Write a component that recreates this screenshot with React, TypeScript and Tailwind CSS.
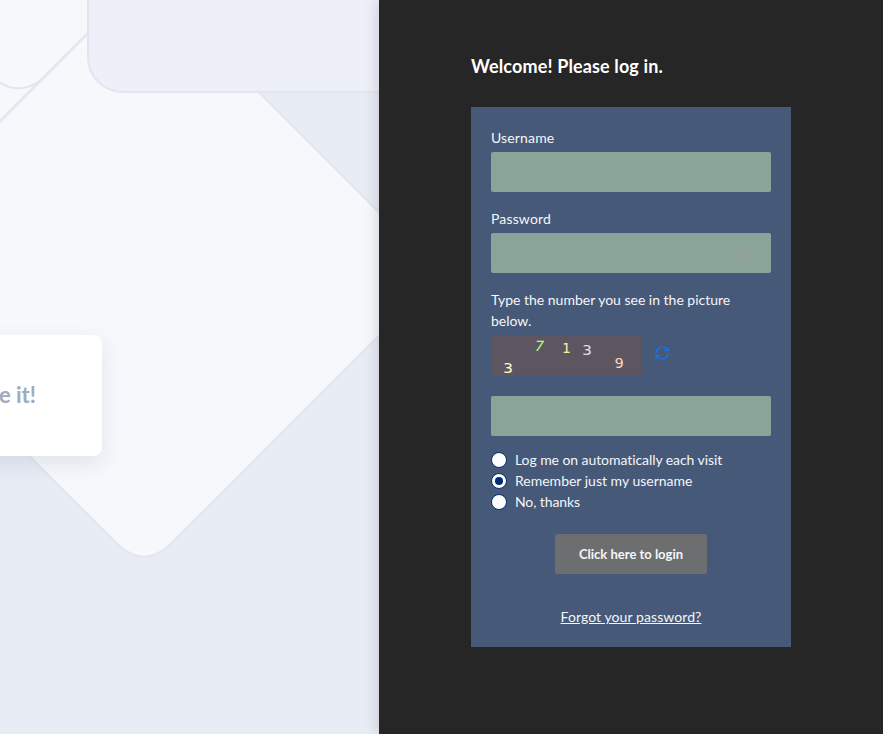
import React from "react";
import { RefreshCw } from "lucide-react";
import { AiOutlineEye } from "react-icons/ai";

const options = [
  { text: "Log me on automatically each visit", tracking: "tracking-[-0.07px]" },
  { text: "Remember just my username", tracking: "tracking-normal" },
  { text: "No, thanks", tracking: "tracking-[-0.1px]" },
];

function Backdrop() {
  return (
    <svg className="absolute inset-0" width="379" height="734" viewBox="0 0 379 734" fill="none">
      <path
        d="M-60 182 L88 33 L199 32 L413 246 Q441 274 413 302 L169.500 545.500 Q144 568.500 118.500 545.500 L-60 367 Z"
        fill="#f6f8fc"
        stroke="#e3e8ef"
        strokeWidth="2.500"
      />
      <path d="M-60 -20 H88 V33 L0 121 L-60 182 Z" fill="#f6f8fc" />
      <path d="M88 33 L-10 131" stroke="#e3e8ef" strokeWidth="2.500" />
      <path d="M-20 70 L-7 78 Q16 97 40 81" stroke="#e0e6ec" strokeWidth="2" />
      <rect x="88" y="-100" width="500" height="192" rx="35" fill="#edf0f9" stroke="#e1e6ee" strokeWidth="2" />
    </svg>
  );
}

function Field({ label, eye = false }: { label: string; eye?: boolean }) {
  return (
    <label className="mb-4 block">
      <span className="block h-[25px] tracking-[0.15px]">{label}</span>
      <span className="flex h-10 items-center justify-end rounded-[2px] bg-[#8aa499] pr-4">
        {eye && <AiOutlineEye size={18} className="text-[#9f9a9a]" />}
      </span>
    </label>
  );
}

export default function App() {
  return (
    <div className="flex h-[734px] w-[883px] overflow-hidden bg-[#e8ecf5] font-['Lato',sans-serif] text-sm leading-[21px] text-[#f4f6f9] [font-variant-ligatures:none]">
      <section className="relative w-[379px] shrink-0">
        <Backdrop />
        <div className="absolute top-[335px] -left-40 flex h-[121px] w-[262px] items-center justify-end rounded-[8px] bg-white pr-[66px] pb-[2px] text-[22px] font-bold text-[#a2abbc] shadow-[0_8px_22px_rgba(40,50,80,0.1)]">
          e it!
        </div>
      </section>
      <main className="relative flex-1 bg-[#262626] pl-[92px] shadow-[0_0_15px_rgba(0,0,0,0.18)]">
        <h1 className="pt-[51px] text-[18px] leading-[30px] font-bold tracking-[0.14px] text-white">Welcome! Please log in.</h1>
        <form className="mt-[26px] h-[540px] w-80 bg-[#465978] px-5 pt-5">
          <Field label="Username" />
          <Field label="Password" eye />
          <p className="tracking-[-0.01px]">Type the number you see in the picture below.</p>
          <div className="mt-[4px] flex h-10 items-center">
            <div className="relative h-10 w-[150px] bg-[#5d5660] font-['DejaVu_Sans_Mono',monospace] text-[14px] leading-[14px]">
              <span className="absolute top-[26px] left-[13px] scale-x-115 text-[#fbfbcf]">3</span>
              <span className="absolute top-[4px] left-[44px] -skew-x-12 scale-x-110 text-[#b9fb82]">7</span>
              <span className="absolute top-[6px] left-[71px] text-[#f8f49b]">1</span>
              <span className="absolute top-[8px] left-[92px] scale-x-115 text-[#dfdce9]">3</span>
              <span className="absolute top-[21px] left-[124px] scale-x-110 text-[#ffd3bd]">9</span>
            </div>
            <RefreshCw size={16} strokeWidth={1.7} className="mt-[-4px] ml-[13px] text-[#1677ed]" />
          </div>
          <div className="mt-[21px] h-10 rounded-[2px] bg-[#8aa499]" />
          <div className="mt-[13px]">
            {options.map(({ text, tracking }, index) => (
              <label key={text} className="flex h-[21px] items-center">
                <span className="mr-2 flex size-4 items-center justify-center rounded-full border border-[#002d72] bg-white">
                  {index === 1 && <span className="size-2 rounded-full bg-[#002d72]" />}
                </span>
                <span className={tracking}>{text}</span>
              </label>
            ))}
          </div>
          <div className="mt-[22px] flex flex-col items-center">
            <button type="button" className="h-10 w-[152px] rounded-[2px] bg-[#6c6e70] text-[13px] font-bold">Click here to login</button>
            <a className="mt-[32px] tracking-[0.08px] underline">Forgot your password?</a>
          </div>
        </form>
      </main>
    </div>
  );
}
